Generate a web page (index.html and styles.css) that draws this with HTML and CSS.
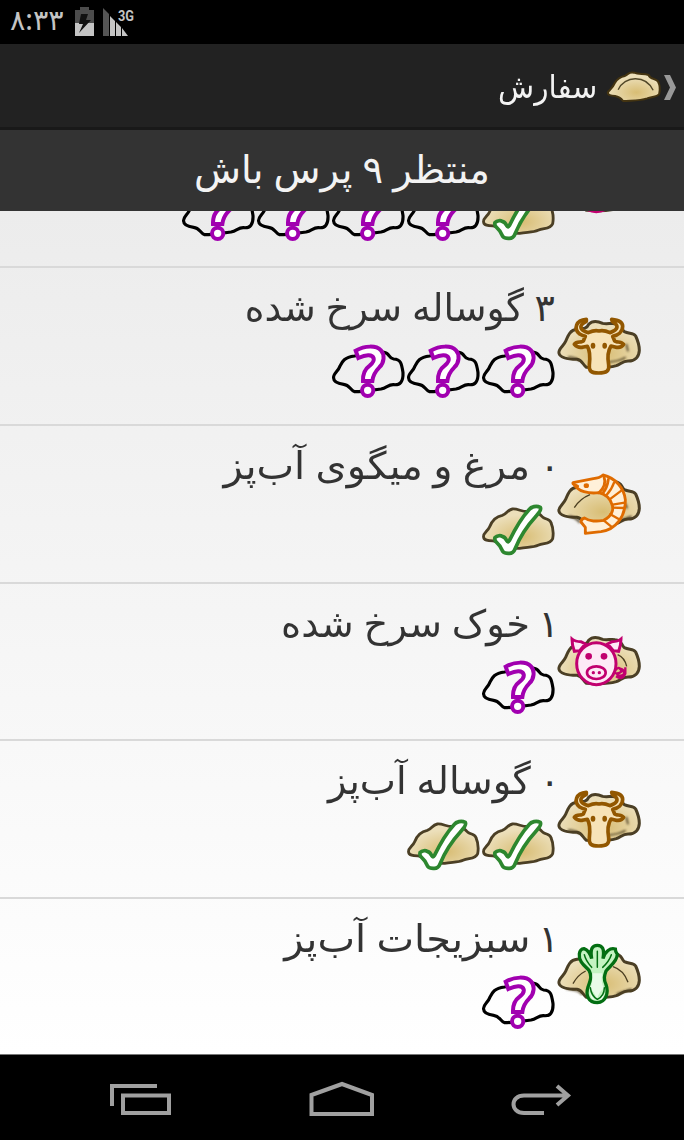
FILE: index.html
```html
<!DOCTYPE html>
<html lang="fa" dir="rtl">
<head>
<meta charset="utf-8">
<title>سفارش</title>
<link rel="stylesheet" href="styles.css">
</head>
<body>
<svg class="defs" width="0" height="0" aria-hidden="true">
  <defs>
    <radialGradient id="dough" cx=".55" cy=".7" r=".55"><stop offset="0" stop-color="#d8bd74"/><stop offset="1" stop-color="#ecdfba"/></radialGradient>
    <filter id="soft" x="-20%" y="-20%" width="140%" height="140%"><feGaussianBlur stdDeviation="3"/></filter>
    <symbol id="dumpling" viewBox="0 0 264 210">
      <path d="M12 124C8 112 27 101 32 88C40 68 46 54 66 52C88 50 96 49 101 37C113 24 128 27 143 34C155 37 167 33 180 35C202 37 198 51 208 59C222 66 235 62 242 72C249 87 253 99 253 115C252 136 238 147 221 147C204 146 199 155 184 161C160 168 124 168 94 166C84 159 82 144 66 142C48 142 17 140 12 124Z" fill="url(#dough)" stroke="#4b3f25" stroke-width="9"/>
    </symbol>
    <symbol id="done" viewBox="31 150 225 180">
      <path d="M42 262C38 250 55 243 60 230C67 212 76 200 98 196C112 192 112 180 128 177C145 175 160 188 178 184C206 180 210 195 220 202C230 209 240 206 244 218C250 232 252 250 249 266C242 283 222 278 205 286C192 293 173 291 150 295L106 294C91 289 90 275 73 273C57 272 43 272 42 262Z" fill="url(#dough)" stroke="#4b3f25" stroke-width="8.500"/>
      <path d="M76 263C83 256 93 256 97 259Q106 260 111 272Q115 279 119 272C134 241 151 208 178 179C185 170 200 166 212 172C217 181 205 190 199 199C175 225 149 265 136 297Q131 310 119 310Q105 311 99 304Q91 285 78 274Q74 267 76 263Z" fill="#fff" stroke="#2d872f" stroke-width="11" stroke-linejoin="round"/>
    </symbol>
    <symbol id="pending" viewBox="31 143 225 180">
      <path d="M42 252C38 240 55 232 60 217C68 200 74 189 105 185C121 182 120 172 136 170L193 174C211 176 206 192 222 194C245 195 246 210 250 235C251 261 242 273 222 271C206 270 202 280 184 284C160 286 136 292 105 292C91 288 91 272 72 270C56 268 42 264 42 252Z" fill="none" stroke="#000" stroke-width="9.500"/>
      <path d="M108 169C136 153 170 153 184 168C196 181 194 205 179 219C167 231 160 242 158 260H130C129 236 136 224 150 214C160 206 164 200 162 192C158 178 137 182 116 191Z" fill="#fff" stroke="#a100b0" stroke-width="12"/>
      <circle cx="144" cy="288" r="17" fill="#fff" stroke="#a100b0" stroke-width="12"/>
    </symbol>
    <symbol id="bull" viewBox="45 337 264 210">
      <use href="#dumpling" x="45" y="337" width="264" height="210"/>
      <g filter="url(#soft)" fill="none" stroke="#4b3e20" stroke-width="5"><path d="M84 472Q106 472 116 482M207 487Q240 484 257 473M259 433L264 455"/></g>
      <path d="M139 359C107 361 100 388 119 403Q127 408 136 410L130 424L122 427Q108 426 103 434Q115 447 130 442L142 440C152 456 150 478 148 496C146 514 153 520 176 520C199 520 209 514 206 496C202 474 202 456 213 439L225 442Q243 447 251 434Q244 426 232 427L224 424L218 410C233 407 248 397 248 380Q248 362 215 359L217 365C238 378 235 390 210 399Q190 390 177 394Q164 390 145 399C118 392 115 377 139 365Z" fill="#f7e3b8" stroke="#925700" stroke-width="11" stroke-linejoin="round"/>
      <ellipse cx="159" cy="438" rx="7" ry="9" fill="#925700"/><ellipse cx="194" cy="438" rx="7" ry="9" fill="#925700"/>
    </symbol>
    <symbol id="shrimp" viewBox="255 60 264 210">
      <use href="#dumpling" x="255" y="60" width="264" height="210"/>
      <g fill="none" stroke="#4b3e20"><path d="M313 173Q330 146 360 134" stroke-width="4"/><path d="M297 199Q316 201 330 218M451 212L485 199M465 160L471 175" stroke-width="6" filter="url(#soft)"/></g>
      <g fill="#fff0d9" stroke="#df6b00" stroke-width="8.500" stroke-linejoin="round" stroke-linecap="round">
        <path d="M309 98L370 86Q389 84 399 75C436 84 462 113 466 149C467 199 438 239 393 245L346 250L346 232L333 216Q333 206 344 204Q354 212 370 213Q391 213 401 211C424 199 433 180 426 164C421 147 408 133 386 128Q363 131 342 125Q319 119 309 98Z"/>
        <path d="M402 80Q411 105 387 128M415 88Q412 113 398 130" fill="none"/>
        <path d="M432 98Q426 117 409 136M454 122L419 148M464 158L428 164M462 174L428 173M446 207L421 193M424 230L402 212" fill="none" stroke-width="7"/>
        <path d="M309 101L323 109" fill="none"/>
      </g><ellipse cx="349" cy="107" rx="8" ry="7" fill="#df6b00"/>
    </symbol>
    <symbol id="pig" viewBox="255 53 264 210">
      <use href="#dumpling" x="255" y="53" width="264" height="210"/>
      <path d="M443 133Q464 142 470 168" fill="none" stroke="#4b3e20" stroke-width="4"/>
      <g fill="#fdeaf6" stroke="#c1006f" stroke-width="9">
        <path d="M306 86Q306 104 313 123L329 121L346 101L333 94Q315 94 306 86ZM453 86Q453 104 446 123L430 121L413 101L426 94Q444 94 453 86Z"/>
        <path d="M437 179Q447 165 455 183Q446 192 434 188M438 198Q458 211 466 190V171M449 174Q466 177 461 193Q447 200 440 191" fill="none" stroke-width="7"/>
        <ellipse cx="379" cy="160" rx="59" ry="63"/>
        <ellipse cx="379" cy="187" rx="28" ry="19" stroke-width="8"/>
      </g><g fill="#c1006f"><circle cx="356" cy="138" r="10"/><circle cx="402" cy="138" r="10"/><circle cx="370" cy="187" r="5"/><circle cx="388" cy="187" r="5"/></g>
    </symbol>
    <symbol id="greens" viewBox="255 69 264 210">
      <use href="#dumpling" x="255" y="66" width="264" height="210"/>
      <g fill="none" stroke="#4b3e20"><path d="M309 191Q323 165 347 153M429 140Q461 150 474 187" stroke-width="4"/><path d="M290 207Q325 208 337 224M440 222L485 207" stroke-width="5" filter="url(#soft)"/></g>
      <path d="M365 116C360 86 367 76 382 76C397 76 404 86 399 116C405 94 421 82 436 87Q436 96 442 103C442 125 419 139 408 153C403 167 400 176 408 194C417 219 407 247 382 248C355 248 346 226 354 201C364 174 365 167 357 151C345 138 325 125 328 102Q330 87 342 86Q358 91 365 116Z" fill="#c4f3c2" stroke="#036e12" stroke-width="10"/>
      <path d="M367 160H397C392 182 397 195 402 206Q389 211 381 236Q371 212 360 207Q369 190 367 160Z" fill="#e9fbe8"/>
      <path d="M361 218Q365 233 375 240Q362 237 361 218M401 218Q397 233 388 240Q401 237 401 218" fill="#fff"/>
      <path d="M382 94V142M343 104Q347 122 365 142M424 104Q418 123 398 142M361 203Q364 228 382 238Q403 228 403 203" fill="none" stroke="#036e12" stroke-width="4.500" stroke-linecap="round"/>
    </symbol>
  </defs>
</svg>

<div class="screen">
  <div class="status" dir="ltr">
    <span class="clock">۸:۳۳</span>
    <svg class="battery" viewBox="0 0 19 29"><path d="M0 3H5V0H14V3H19V29H0Z" fill="#4c4c4c"/><path d="M0 16H19V29H0Z" fill="#c4c4c4"/><path d="M6 7H13L11 13H16L4 26L8 17H4Z" fill="#111"/></svg>
    <svg class="signal" viewBox="0 0 32 29"><path d="M0 1L6 7V29H0Z" fill="#555"/><path d="M7 9L12 14V29H7ZM13 15L18 20V29H13ZM19 21L25 29H19Z" fill="#c4c4c4"/><text x="15" y="14" textLength="16" lengthAdjust="spacingAndGlyphs">3G</text></svg>
  </div>

  <header class="actionbar">
    <svg class="up" viewBox="0 0 12 25"><path d="M0 0H6L12 12.500L6 25H0L6 12.500Z" fill="#999"/></svg>
    <svg class="logo" viewBox="372 84 176 108"><path d="M383 157C389 149 397 145 404 129C411 117 418 111 434 108C448 100 447 94 462 98C476 105 491 99 505 105C511 119 526 115 533 124C540 137 540 150 537 162C530 172 515 169 501 175C479 183 455 181 429 183C421 173 416 170 405 168C394 167 382 166 383 157Z" fill="url(#dough)" stroke="#443411" stroke-width="6"/><path d="M414 149C433 107 496 103 519 151" fill="none" stroke="#514728" stroke-width="4"/></svg>
    <h1 class="title">سفارش</h1>
  </header>
  <div class="summary"><span>منتظر ۹ پرس باش</span></div>

  <main class="list">
    <section class="row">
      <svg class="kind"><use href="#pig"/></svg>
      <div class="body"><p class="name"></p><div class="tiles"><svg><use href="#done"/></svg><svg><use href="#pending"/></svg><svg><use href="#pending"/></svg><svg><use href="#pending"/></svg><svg><use href="#pending"/></svg></div></div>
    </section>
    <section class="row">
      <svg class="kind"><use href="#bull"/></svg>
      <div class="body"><p class="name fried-beef"><span class="count">۳</span> <span class="dish">گوساله سرخ شده</span></p><div class="tiles"><svg><use href="#pending"/></svg><svg><use href="#pending"/></svg><svg><use href="#pending"/></svg></div></div>
    </section>
    <section class="row">
      <svg class="kind"><use href="#shrimp"/></svg>
      <div class="body"><p class="name boiled-shrimp"><span class="count">۰</span> <span class="dish">مرغ و میگوی آب‌پز</span></p><div class="tiles"><svg><use href="#done"/></svg></div></div>
    </section>
    <section class="row">
      <svg class="kind"><use href="#pig"/></svg>
      <div class="body"><p class="name fried-pork"><span class="count">۱</span> <span class="dish">خوک سرخ شده</span></p><div class="tiles"><svg><use href="#pending"/></svg></div></div>
    </section>
    <section class="row">
      <svg class="kind"><use href="#bull"/></svg>
      <div class="body"><p class="name boiled-beef"><span class="count">۰</span> <span class="dish">گوساله آب‌پز</span></p><div class="tiles"><svg><use href="#done"/></svg><svg><use href="#done"/></svg></div></div>
    </section>
    <section class="row">
      <svg class="kind"><use href="#greens"/></svg>
      <div class="body"><p class="name boiled-greens"><span class="count">۱</span> <span class="dish">سبزیجات آب‌پز</span></p><div class="tiles"><svg><use href="#pending"/></svg></div></div>
    </section>
  </main>

  <nav class="navbar" dir="ltr">
    <svg class="low" width="62" height="32" viewBox="0 0 62 32"><path d="M2 22V2H47M13 11.500H59V29H13Z"/></svg>
    <svg width="66" height="36" viewBox="0 0 66 36"><path d="M3.500 14L34 3L64 14V33H3.500Z"/></svg>
    <svg class="low" width="62" height="32" viewBox="0 0 62 32"><path d="M34 29H14C0 29 0 11.500 14 11.500H58M47 2L58 11.500L47 21"/></svg>
  </nav>
</div>
</body>
</html>
```
FILE: styles.css
```css
* { box-sizing: border-box; }
body { margin: 0; font-family: "Noto Sans", "DejaVu Sans", sans-serif; background: #000; }
.defs { position: absolute; }
.screen { display: flex; flex-direction: column; width: 684px; height: 1140px; overflow: hidden; }
.status { height: 44px; flex: none; display: flex; background: #000; color: #c4c4c4; padding: 7px 10px; }
.clock { width: 65px; font-size: 28.5px; line-height: 25px; }
.battery { width: 19px; height: 29px; }
.signal { width: 32px; height: 29px; margin-left: 9px; }
.signal text { font: bold 14px Roboto, sans-serif; fill: #c4c4c4; }
.actionbar { height: 86px; flex: none; display: flex; align-items: center; background: #222; border-bottom: 3px solid #191919; padding-right: 8px; }
.up { width: 12px; height: 25px; margin-top: 4px; }
.logo { width: 59px; height: 36px; margin-right: 1px; }
.title { margin: 0 7px 0 0; color: #f3f3f3; font-size: 32px; font-weight: 400; line-height: 58px; transform: scaleX(.925); transform-origin: right; }
.summary { height: 81px; flex: none; background: #333; color: #f3f3f3; font-size: 38.5px; line-height: 77px; text-align: center; }
.list { flex: none; height: 843px; overflow: hidden; background: linear-gradient(#ececec, #fff); }
.row { height: 157.7px; display: flex; padding-right: 41px; border-bottom: 2px solid #d9d9d9; }
.row:first-child { margin-top: -100.4px; }
.row:last-child { border-bottom: 0; }
.kind { width: 88px; height: 70px; margin-top: 44px; flex: none; }
.body { flex: 1; }
.name { display: flex; margin: 0; height: 74px; font-size: 38px; line-height: 76px; color: #333; white-space: nowrap; }
.count { width: 26px; flex: none; }
.dish { transform-origin: right; }
.fried-beef .count { width: 31px; }
.fried-beef .dish { transform: scaleX(.99); }
.boiled-shrimp .count { margin-right: -5px; width: 30px; }
.boiled-shrimp .dish { transform: scaleX(1.05); }
.fried-pork .count, .boiled-greens .count { margin-right: -4px; width: 29px; }
.fried-pork .dish { transform: scaleX(1.012); }
.boiled-beef .count { margin-right: -5px; width: 29px; }
.boiled-beef .dish { transform: scaleX(1.01); }
.boiled-greens .dish { transform: scaleX(1.05); }
.tiles { display: flex; height: 60px; }
.tiles svg { width: 75px; height: 60px; }
.navbar { flex: none; height: 86px; display: flex; justify-content: space-between; padding: 26px 112px 0 110px; border-top: 1px solid #777; background: #000; }
.navbar svg { fill: none; stroke: #a0a0a0; stroke-width: 4; }
.navbar .low { margin-top: 3px; }
```
